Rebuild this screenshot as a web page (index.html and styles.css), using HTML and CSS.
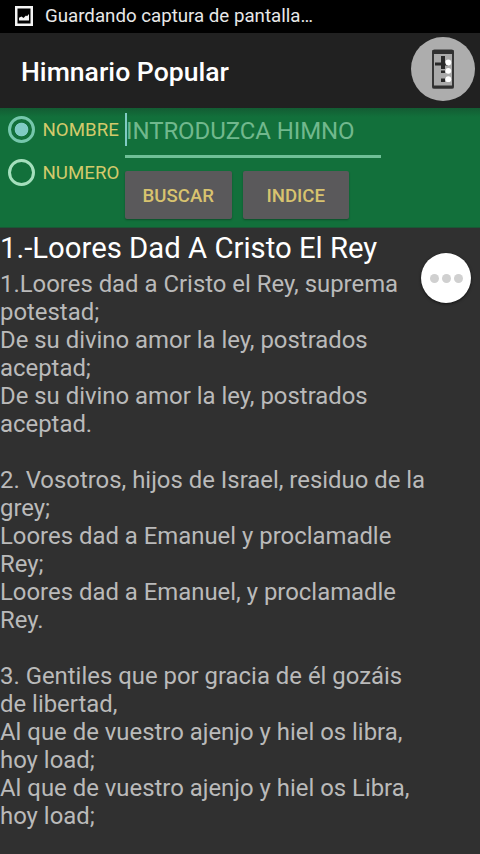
FILE: index.html
```html
<!DOCTYPE html>
<html lang="es">
<head>
<meta charset="utf-8">
<title>Himnario Popular</title>
<link rel="stylesheet" href="styles.css">
</head>
<body>
<div class="statusbar">
  <svg class="status-icon" width="18" height="20" viewBox="0 0 18 20">
    <rect x="1.25" y="1.25" width="15.5" height="17.5" fill="none" stroke="#f4f4f4" stroke-width="2.5"/>
    <path d="M4 14.500V11.800L6.500 10.500L8.500 12L11 9.500L12 10.300L14 8V14.500Z" fill="#f4f4f4"/>
  </svg>
  <span class="status-text">Guardando captura de pantalla…</span>
</div>
<header class="appbar">
  <h1 class="app-title">Himnario Popular</h1>
  <svg class="capture" width="66" height="66" viewBox="0 0 66 66">
    <circle cx="33" cy="33" r="32" fill="#adadad"/>
    <rect x="23" y="14.500" width="20" height="37" rx="1.500" fill="#aaa" stroke="#363636" stroke-width="2"/>
    <path d="M22.500 14H43.500V18H22.500ZM22.500 49.500H43.500V52.500H22.500Z" fill="#303030"/>
    <path d="M31 20H35V33H31ZM25 26.500H38V29.500H25ZM31 34.500H35V37H31ZM31 42.500H35V46H31Z" fill="#292929"/>
    <circle cx="38.300" cy="26.500" r="2.900" fill="#fff"/>
    <circle cx="38.300" cy="34.800" r="2.900" fill="#fff"/>
    <circle cx="38.300" cy="43.200" r="2.900" fill="#fff"/>
  </svg>
</header>
<section class="search">
  <div class="options">
    <div class="option"><span class="radio checked"></span><span class="label">NOMBRE</span></div>
    <div class="option"><span class="radio"></span><span class="label">NUMERO</span></div>
  </div>
  <div class="controls">
    <div class="field"><span class="hint">INTRODUZCA HIMNO</span></div>
    <div class="buttons">
      <button class="button">BUSCAR</button>
      <button class="button">INDICE</button>
    </div>
  </div>
</section>
<main class="hymn">
  <h2 class="hymn-title">1.-Loores Dad A Cristo El Rey</h2>
  <p class="verse">1.Loores dad a Cristo el Rey, suprema<br>potestad;<br>De su divino amor la ley, postrados<br>aceptad;<br>De su divino amor la ley, postrados<br>aceptad.</p>
  <p class="verse">2. Vosotros, hijos de Israel, residuo de la<br>grey;<br>Loores dad a Emanuel y proclamadle<br>Rey;<br>Loores dad a Emanuel, y proclamadle<br>Rey.</p>
  <p class="verse">3. Gentiles que por gracia de él gozáis<br>de libertad,<br>Al que de vuestro ajenjo y hiel os libra,<br>hoy load;<br>Al que de vuestro ajenjo y hiel os Libra,<br>hoy load;</p>
</main>
<div class="fab"><i></i><i></i><i></i></div>
</body>
</html>
```

FILE: styles.css
```css
* { box-sizing: border-box; }
body {
  margin: 0;
  width: 480px;
  height: 854px;
  overflow: hidden;
  position: relative;
  background: #303030;
  font-family: Roboto, "Liberation Sans", sans-serif;
}
.statusbar {
  height: 33px;
  padding-left: 15px;
  display: flex;
  align-items: center;
  gap: 12px;
  background: #000;
  color: #e8e8e8;
}
.status-icon { margin-top: -1px; }
.status-text {
  font-size: 18.7px;
  line-height: 33px;
  height: 34px;
  white-space: nowrap;
}
.appbar {
  height: 75px;
  padding: 0 4px 0 21px;
  display: flex;
  align-items: center;
  justify-content: space-between;
  background: #212121;
}
.app-title {
  margin: 3px 0 0;
  font-size: 26.6px;
  line-height: 32px;
  font-weight: 500;
  color: #fff;
  white-space: nowrap;
}
.capture { margin-top: -4px; flex: none; }
.search {
  height: 120px;
  display: flex;
  background: linear-gradient(#135c33, #12703b 9px);
  border-bottom: 1px solid #1b5736;
}
.options { width: 125px; padding-left: 8px; }
.option {
  height: 43px;
  display: flex;
  align-items: center;
  gap: 8px;
}
.radio {
  width: 27px;
  height: 27px;
  flex: none;
  border: 3px solid #a5dfbd;
  border-radius: 50%;
}
.radio.checked {
  border-color: #75c7ac;
  background: radial-gradient(circle, #80cbc4 6.4px, transparent 7.2px);
}
.label {
  margin-left: -0.5px;
  font-size: 18.7px;
  line-height: 22px;
  padding-top: 1px;
  color: #d3ca6b;
}
.field {
  width: 256px;
  height: 50px;
  padding-top: 5px;
  border-bottom: 3px solid #6fc097;
}
.hint {
  display: block;
  height: 33px;
  border-left: 2px solid #80cbc4;
  font-size: 24px;
  line-height: 36px;
  color: #71b88d;
  white-space: nowrap;
  text-indent: -1px;
  letter-spacing: -0.08px;
}
.buttons { display: flex; gap: 11px; padding-top: 13px; }
.button {
  width: 106.5px;
  height: 48px;
  padding: 2px 0 0;
  border: 0;
  border-radius: 2px;
  background: #5a595b;
  box-shadow: 0 1px 2px rgba(0, 0, 0, .3);
  font: 500 18.6px/22px Roboto, sans-serif;
  color: #d8c36f;
}
.hymn-title {
  margin: 0;
  font-size: 29.3px;
  line-height: 40px;
  height: 42px;
  font-weight: 400;
  color: #fff;
  white-space: nowrap;
}
.verse {
  margin: 0 0 28px;
  font-size: 23.9px;
  line-height: 28px;
  color: #bababa;
  white-space: nowrap;
}
.fab {
  position: absolute;
  left: 421px;
  top: 253px;
  width: 50px;
  height: 50px;
  display: flex;
  align-items: center;
  justify-content: center;
  gap: 3px;
  border-radius: 50%;
  background: #fff;
  box-shadow: 0 1px 3px rgba(0, 0, 0, .6);
}
.fab i {
  width: 9px;
  height: 9px;
  border-radius: 50%;
  background: #d0d0d0;
}
```
